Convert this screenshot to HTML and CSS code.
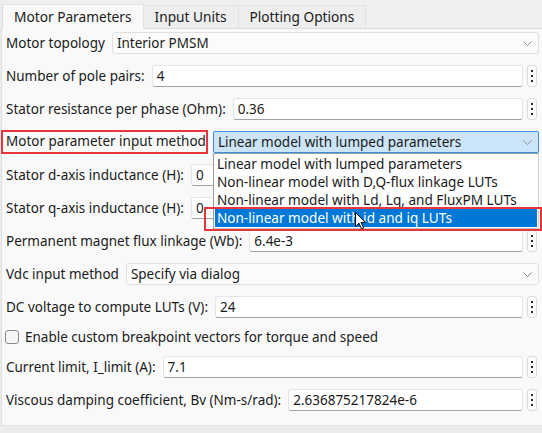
FILE: index.html
```html
<!DOCTYPE html>
<html lang="en">
  <head>
    <meta charset="UTF-8" />
    <meta name="viewport" content="width=device-width, initial-scale=1.0" />
    <title>Motor Parameters</title>
    <link rel="stylesheet" href="styles.css">
  </head>
  <body>
    <div class="window">
      <div class="tabs">
        <div class="tab tab-active">Motor Parameters</div>
        <div class="tab">Input Units</div>
        <div class="tab">Plotting Options</div>
      </div>
      <div class="panel">
        <div class="row">
          <span class="label">Motor topology</span>
          <div class="select">
            <span>Interior PMSM</span>
            <svg class="chevron" width="9" height="5" viewBox="0 0 9 5"><path d="M0.5 0.5 L4.5 4.5 L8.5 0.5" /></svg>
          </div>
        </div>
        <div class="row">
          <span class="label">Number of pole pairs:</span>
          <div class="edit">4</div>
          <div class="more"><i></i><i></i><i></i></div>
        </div>
        <div class="row">
          <span class="label">Stator resistance per phase (Ohm):</span>
          <div class="edit">0.36</div>
          <div class="more"><i></i><i></i><i></i></div>
        </div>
        <div class="row">
          <span class="label label-marked">Motor parameter input method</span>
          <div class="select select-open">
            <span>Linear model with lumped parameters</span>
            <svg class="chevron" width="9" height="5" viewBox="0 0 9 5"><path d="M0.5 0.5 L4.5 4.5 L8.5 0.5" /></svg>
            <div class="popup">
              <div class="option">Linear model with lumped parameters</div>
              <div class="option">Non-linear model with D,Q-flux linkage LUTs</div>
              <div class="option">Non-linear model with Ld, Lq, and FluxPM LUTs</div>
              <div class="option option-hot">
                Non-linear model with id and iq LUTs
                <svg class="cursor" width="12" height="18" viewBox="0 0 12 18"><path d="M0.5 0.5 L0.5 14.5 L4 11.2 L6.5 16.8 L8.6 15.9 L6.1 10.4 L10.6 10.4 Z" /></svg>
              </div>
              <div class="mark"></div>
            </div>
          </div>
        </div>
        <div class="row">
          <span class="label">Stator d-axis inductance (H):</span>
          <div class="edit">0</div>
          <div class="more"><i></i><i></i><i></i></div>
        </div>
        <div class="row">
          <span class="label">Stator q-axis inductance (H):</span>
          <div class="edit">0</div>
          <div class="more"><i></i><i></i><i></i></div>
        </div>
        <div class="row">
          <span class="label">Permanent magnet flux linkage (Wb):</span>
          <div class="edit">6.4e-3</div>
          <div class="more"><i></i><i></i><i></i></div>
        </div>
        <div class="row">
          <span class="label">Vdc input method</span>
          <div class="select">
            <span>Specify via dialog</span>
            <svg class="chevron" width="9" height="5" viewBox="0 0 9 5"><path d="M0.5 0.5 L4.5 4.5 L8.5 0.5" /></svg>
          </div>
        </div>
        <div class="row">
          <span class="label">DC voltage to compute LUTs (V):</span>
          <div class="edit">24</div>
          <div class="more"><i></i><i></i><i></i></div>
        </div>
        <div class="row row-check">
          <span class="checkbox"></span>
          <span class="label">Enable custom breakpoint vectors for torque and speed</span>
        </div>
        <div class="row">
          <span class="label">Current limit, I_limit (A):</span>
          <div class="edit">7.1</div>
          <div class="more"><i></i><i></i><i></i></div>
        </div>
        <div class="row">
          <span class="label">Viscous damping coefficient, Bv (Nm-s/rad):</span>
          <div class="edit">2.636875217824e-6</div>
          <div class="more"><i></i><i></i><i></i></div>
        </div>
      </div>
    </div>
  </body>
</html>
```

FILE: styles.css
```css
/* Dialog styles */
body {
  margin: 0;
  background: #ececec;
  font-family: "Noto Sans", "Segoe UI", sans-serif;
  font-size: 13.5px;
  color: #1b1b1b;
}

.window {
  height: 433px;
  padding-left: 1px;
  overflow: hidden;
}

.tabs {
  display: flex;
  align-items: flex-end;
  height: 28px;
  padding-left: 1px;
  background: #efefef;
}

.tab {
  box-sizing: border-box;
  height: 23px;
  line-height: 22px;
  padding: 0 11px;
  font-size: 13.7px;
  background: #eeeeee;
  border: 1px solid #e2e2e2;
  border-bottom: none;
  border-left: none;
}

.tab-active {
  height: 25px;
  line-height: 24px;
  margin-bottom: -1px;
  background: #f9f9f9;
  border-left: 1px solid #dcdcdc;
}

.panel {
  background: #f9f9f9;
  border-top: 1px solid #dcdcdc;
  border-left: 1px solid #e0e0e0;
  border-bottom: 1px solid #e4e4e4;
  padding: 3px 3px 14px 4px;
}

.row {
  display: flex;
  align-items: center;
  gap: 7px;
  height: 22px;
  margin-bottom: 11px;
}

.row:last-child {
  margin-bottom: 0;
}

.label {
  white-space: nowrap;
}

.label-marked {
  box-sizing: border-box;
  height: 24px;
  line-height: 19px;
  margin: 0 -2px 0 -5px;
  padding: 0 0 0 3px;
  border: 2px solid #e8363c;
}

.select {
  flex: 1;
  position: relative;
  box-sizing: border-box;
  height: 22px;
  display: flex;
  align-items: center;
  justify-content: space-between;
  padding: 0 6px 0 4px;
  background: #fbfbfb;
  border: 1px solid #e0e0e0;
  border-radius: 3px;
  white-space: nowrap;
}

.chevron path {
  fill: none;
  stroke: #8c8c8c;
  stroke-width: 1;
}

.select-open {
  background: #cce4f7;
  border-color: #3c8fdc;
  border-radius: 2px;
}

.popup {
  position: absolute;
  z-index: 2;
  top: 21px;
  left: -1px;
  right: -1px;
  padding: 1px;
  background: #fff;
  border: 1px solid #9c9c9c;
  border-right-color: #d4d4d4;
  border-bottom-color: #c4c4c4;
}

.option {
  position: relative;
  height: 18px;
  line-height: 18px;
  padding-left: 2px;
  font-size: 13.6px;
}

.option-hot {
  background: #0078d7;
  color: #fff;
}

.cursor {
  position: absolute;
  left: 140px;
  top: 3px;
}

.cursor path {
  fill: #fff;
  stroke: #000;
  stroke-width: 1;
}

.mark {
  position: absolute;
  left: -10px;
  right: -4px;
  top: 53px;
  height: 24px;
  box-sizing: border-box;
  border: 2px solid #e8363c;
}

.edit {
  flex: 1;
  box-sizing: border-box;
  height: 22px;
  display: flex;
  align-items: center;
  padding: 0 4px;
  overflow: hidden;
  white-space: nowrap;
  background: #fff;
  border: 1px solid #e5e5e5;
  border-bottom-color: #a2a2a2;
  border-radius: 3px;
}

.more {
  box-sizing: border-box;
  width: 10px;
  height: 22px;
  margin: 0 2px 0 -3px;
  display: flex;
  flex-direction: column;
  align-items: center;
  justify-content: center;
  gap: 3px;
  background: #fbfbfb;
  border: 1px solid #dcdcdc;
  border-radius: 3px;
}

.more i {
  width: 2px;
  height: 2px;
  background: #2a2a2a;
}

.row-check {
  height: 16px;
  gap: 6px;
}

.checkbox {
  box-sizing: border-box;
  width: 14px;
  height: 14px;
  margin-left: -1px;
  background: #f6f6f6;
  border: 1px solid #8a8a8a;
  border-radius: 3px;
}
```
